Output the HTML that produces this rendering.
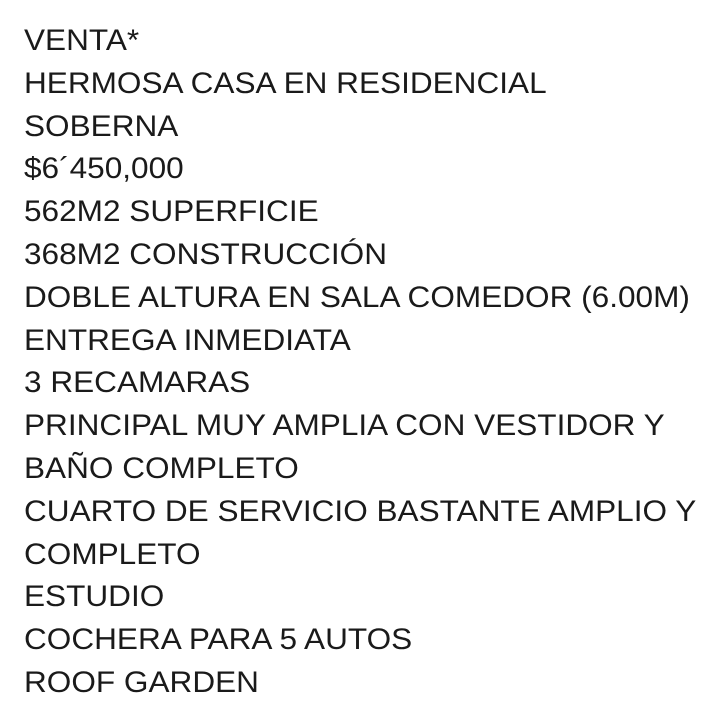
<!DOCTYPE html>
<html><head><meta charset="utf-8"><style>
html,body{margin:0;padding:0;background:#fff;width:720px;height:703px;overflow:hidden}
.t{position:absolute;left:24px;top:20px;font-family:"Liberation Sans",sans-serif;font-size:30px;line-height:42.8px;color:#1a1a1a;white-space:nowrap;transform:scaleX(1.052);transform-origin:0 0}
</style></head><body><div class="t">
VENTA*<br>
HERMOSA CASA EN RESIDENCIAL<br>
SOBERNA<br>
$6´450,000<br>
562M2 SUPERFICIE<br>
368M2 CONSTRUCCIÓN<br>
DOBLE ALTURA EN SALA COMEDOR (6.00M)<br>
ENTREGA INMEDIATA<br>
3 RECAMARAS<br>
PRINCIPAL MUY AMPLIA CON VESTIDOR Y<br>
BAÑO COMPLETO<br>
CUARTO DE SERVICIO BASTANTE AMPLIO Y<br>
COMPLETO<br>
ESTUDIO<br>
COCHERA PARA 5 AUTOS<br>
ROOF GARDEN
</div></body></html>
